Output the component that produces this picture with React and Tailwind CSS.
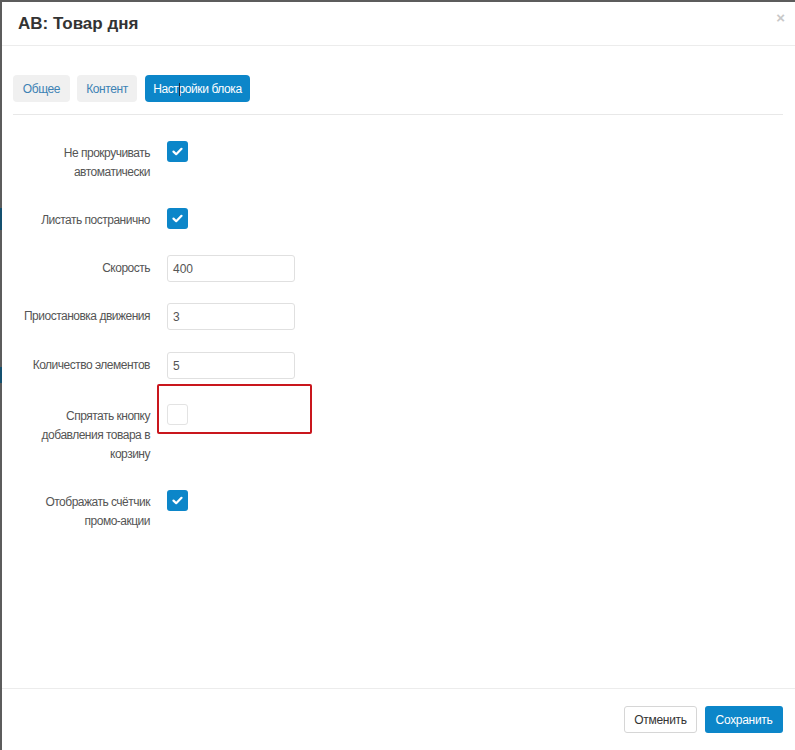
import React from "react";

function Check({ checked }) {
  if (checked) {
    return (
      <div className="w-[21px] h-[21px] rounded-[3px] bg-[#0c86c9] flex items-center justify-center shrink-0">
        <svg width="11" height="9" viewBox="0 0 11 9">
          <path d="M1.5 4.6 L4.2 7.2 L9.5 1.8" stroke="#fff" strokeWidth="2.2" fill="none" strokeLinecap="round" strokeLinejoin="round" />
        </svg>
      </div>
    );
  }
  return <div className="w-[21px] h-[21px] rounded-[3px] border border-[#e3e3e3] bg-white shrink-0" />;
}

function Label({ children, pt = "pt-[3px]" }) {
  return (
    <div className={`w-[137px] shrink-0 text-right text-[12px] tracking-[-0.5px] leading-[19px] text-[#555] ${pt}`}>{children}</div>
  );
}

function CheckRow({ label, checked, className = "", extra }) {
  return (
    <div className={`flex items-start ${className}`}>
      <Label>{label}</Label>
      <div className="ml-[17px] relative">
        <Check checked={checked} />
        {extra}
      </div>
    </div>
  );
}

function InputRow({ label, value, className = "" }) {
  return (
    <div className={`flex items-center ${className}`}>
      <Label pt="pt-0">{label}</Label>
      <div className="ml-[17px] w-[128px] h-[27px] border border-[#e0e0e0] rounded-[3px] bg-white flex items-center px-[5px] text-[12px] text-[#555]">
        {value}
      </div>
    </div>
  );
}

export default function App() {
  return (
    <div className="w-[795px] h-[750px] bg-[#5c5c5c] flex overflow-hidden" style={{ fontFamily: '"Liberation Sans", Arial, sans-serif' }}>
      <div className="w-[2px] shrink-0 flex flex-col">
        <div className="h-[208px]" />
        <div className="h-[22px] bg-[#14506f]" />
        <div className="h-[137px]" />
        <div className="h-[16px] bg-[#14506f]" />
      </div>
      <div className="flex-1 mt-[2px] bg-white flex flex-col relative">
        {/* header */}
        <div className="h-[44px] border-b border-[#ececec] flex items-center pl-[16px] relative">
          <div className="text-[17px] font-bold text-[#333] mt-[1px]">AB: Товар дня</div>
          <div className="absolute right-[10px] top-[5px] text-[15px] font-bold text-[#c8c8c8]">×</div>
        </div>
        {/* body */}
        <div className="flex-1 pl-[11px] pr-[12px] pt-[29px] flex flex-col">
          <div className="flex gap-[7px] pb-[12px] border-b border-[#e8e8e8] tracking-[-0.4px]">
            <div className="h-[27px] w-[57px] rounded-[4px] bg-[#f0f0f0] text-[#3c82b4] text-[12px] flex items-center justify-center">Общее</div>
            <div className="h-[27px] w-[60px] rounded-[4px] bg-[#f0f0f0] text-[#3c82b4] text-[12px] flex items-center justify-center">Контент</div>
            <div className="h-[27px] w-[105px] ml-[1px] rounded-[4px] bg-[#0c86c9] text-white text-[12px] flex items-center justify-center relative">
              Настройки блока
              <div className="absolute left-[34px] top-[8px] w-[1px] h-[13px] bg-[#1a2a3a]" />
            </div>
          </div>
          <div className="flex flex-col">
            <CheckRow className="mt-[26px]" checked label={<>Не прокручивать<br />автоматически</>} />
            <CheckRow className="mt-[26px]" checked label="Листать постранично" />
            <InputRow className="mt-[25px]" label="Скорость" value="400" />
            <InputRow className="mt-[21px]" label="Приостановка движения" value="3" />
            <InputRow className="mt-[22px]" label="Количество элементов" value="5" />
            <CheckRow
              className="mt-[25px]"
              checked={false}
              label={<>Спрятать кнопку<br />добавления товара в<br />корзину</>}
              extra={<div className="absolute left-[-10px] top-[-20px] w-[155px] h-[50px] border-2 border-[#c9161d] rounded-[2px]" />}
            />
            <CheckRow className="mt-[26px]" checked label={<>Отображать счётчик<br />промо-акции</>} />
          </div>
        </div>
        {/* footer */}
        <div className="h-[62px] border-t border-[#ececec] flex items-start justify-end gap-[8px] pr-[12px] pt-[17px] tracking-[-0.3px]">
          <div className="h-[27px] w-[73px] border border-[#d6d6d6] rounded-[3px] bg-white text-[12px] text-[#333] flex items-center justify-center">Отменить</div>
          <div className="h-[27px] w-[78px] rounded-[3px] bg-[#0c86c9] text-[12px] text-white flex items-center justify-center">Сохранить</div>
        </div>
      </div>
    </div>
  );
}
